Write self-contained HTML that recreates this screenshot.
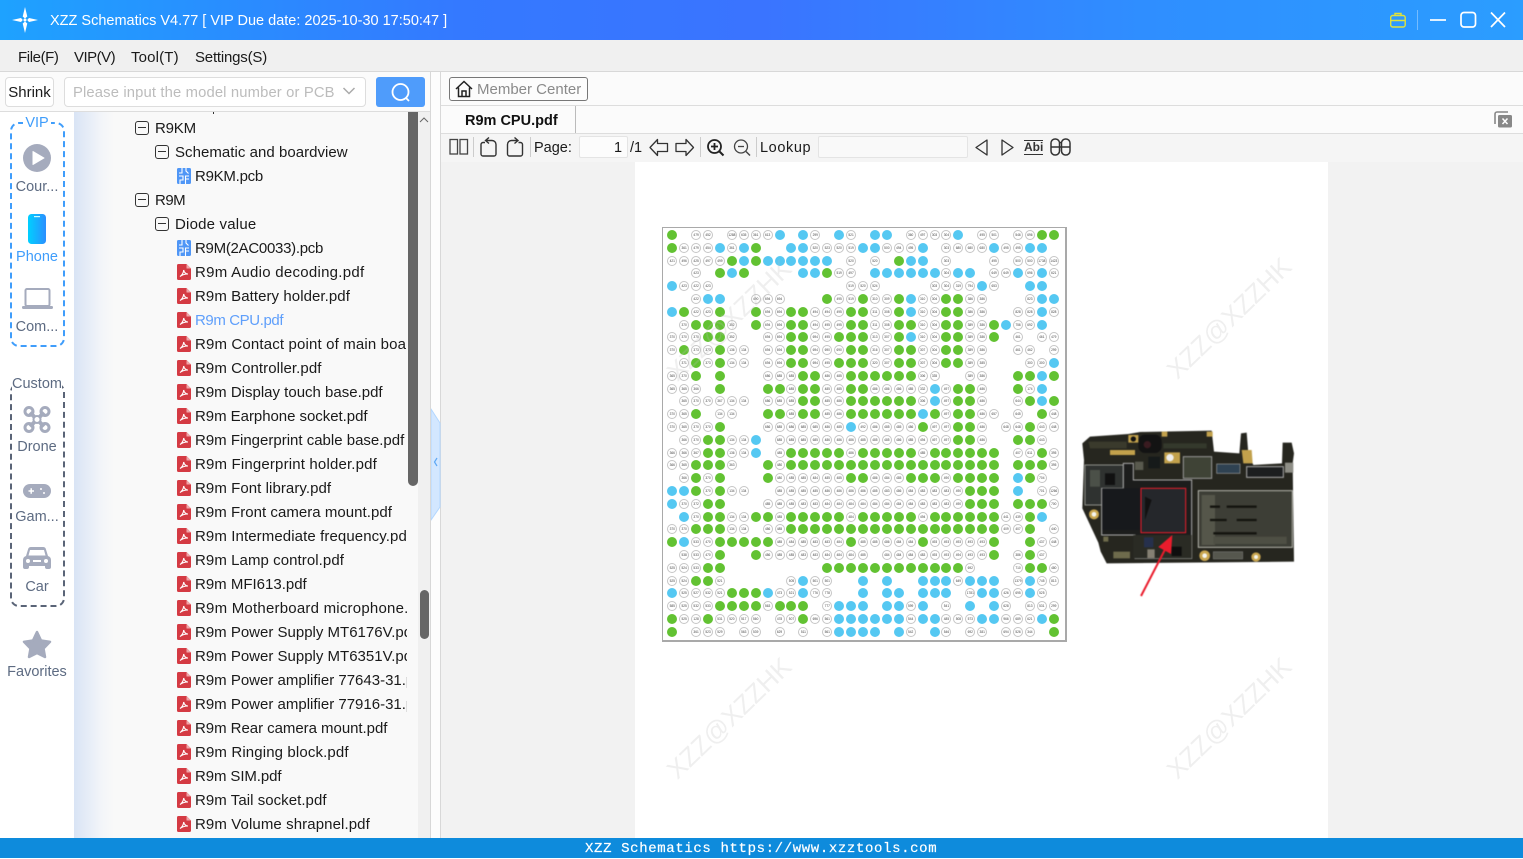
<!DOCTYPE html>
<html><head><meta charset="utf-8"><title>XZZ Schematics</title>
<style>
*{box-sizing:border-box}
html,body{margin:0;padding:0;width:1523px;height:858px;overflow:hidden;background:#fff;font-family:"Liberation Sans","Noto Sans CJK SC",sans-serif;font-size:15px;color:#1a1a1a}
.a{position:absolute}
.tx{position:absolute;white-space:nowrap;line-height:20px;height:20px}
#title{left:0;top:0;width:1523px;height:40px;background:linear-gradient(90deg,#1ea2ff 0,#3479ff 30%,#3a74ff 50%,#2f8eff 75%,#2b9dff 100%)}
#tree .r{height:24px;line-height:24px;white-space:nowrap;position:relative}
.mb{position:absolute;top:4px;width:14px;height:14px;border:1.4px solid #333;border-radius:3px}
.mb:after{content:"";position:absolute;left:2px;right:2px;top:4.8px;height:1.4px;background:#333}
.r svg{position:absolute;top:3px;left:103px}
.side{position:absolute;left:0;width:74px;text-align:center;color:#5d6b82;line-height:20px;font-size:14.5px;white-space:nowrap}
#grid{position:absolute;left:666.3px;top:228.6px;display:grid;grid-template-columns:repeat(33,11.93px);grid-auto-rows:12.8px;filter:blur(.3px)}
#grid>*{display:block;place-self:center;width:10px;height:10px;border-radius:50%;text-decoration:none;font-style:normal;font-weight:normal}
#grid b{background:#62c232}
#grid u{background:#55c8f2}
#grid i{background:none}
#grid s{border:1px solid #c6c6c6;background:#fff;font-size:3.2px;line-height:8px;text-align:center;color:#444;overflow:hidden;font-family:"Liberation Sans",sans-serif}
.wm{position:absolute;font-size:26px;color:rgba(190,190,190,.24);transform:rotate(-44deg);white-space:nowrap;line-height:34px;width:190px;text-align:center}
.sep{position:absolute;top:137px;width:1px;height:20px;background:#ccc}
</style></head><body>
<svg width="0" height="0" style="position:absolute"><defs>
<symbol id="pdf" viewBox="0 0 14 16"><path d="M1.5 0H9.5L14 4.5V14.5A1.5 1.5 0 0 1 12.5 16H1.5A1.5 1.5 0 0 1 0 14.5V1.5A1.5 1.5 0 0 1 1.5 0Z" fill="#d43a43"/><path d="M9.5 0L14 4.5H9.5Z" fill="#f0a4a8"/><path d="M3 12.5C5 11.5 6.5 8.5 6.7 6C7 8.5 9 10 11 10C8.5 10 5.5 10.5 3 12.5Z" fill="none" stroke="#fff" stroke-width="1.1"/></symbol>
<symbol id="pcb" viewBox="0 0 14 16"><rect width="14" height="16" rx="1.5" fill="#4f96f6"/><path d="M5 0V5H2M2 8H6V12H3V16M9 0V3L11.5 5.5M12 8H8.500V16M8.500 11H12" fill="none" stroke="#fff" stroke-width="1.100"/></symbol>
</defs></svg>

<div id="title" class="a">
<svg class="a" style="left:11px;top:6px" width="28" height="28" viewBox="0 0 28 28"><path d="M14 1L16.300 10.500 14 12.500 11.700 10.500ZM14 27L16.300 17.500 14 15.500 11.700 17.500ZM1 14L10 12 11.800 14 10 16ZM27 14L18 12 16.200 14 18 16Z" fill="#fff"/><circle cx="14" cy="14" r="1.500" fill="#fff"/></svg>
<div class="tx" style="left:50px;top:11px;color:#fff;font-size:14.5px">XZZ Schematics V4.77 [ VIP Due date: 2025-10-30 17:50:47 ]</div>
<svg class="a" style="left:1389px;top:11px" width="18" height="18" viewBox="0 0 18 18" fill="none" stroke="#dfe23c" stroke-width="1.400"><rect x="1.700" y="4.500" width="14.500" height="11.500" rx="2"/><path d="M6 4.500V2.500H12V4.500M1.700 9.500H6M12 9.500H16.200M6 9.500H12"/></svg>
<div class="a" style="left:1417px;top:10px;width:1px;height:20px;background:rgba(255,255,255,.35)"></div>
<svg class="a" style="left:1428px;top:9px" width="85" height="22" viewBox="0 0 85 22" fill="none" stroke="#fff" stroke-width="1.700"><path d="M2 11H18"/><rect x="33" y="3.500" width="14.500" height="14.500" rx="3"/><path d="M63 3.500L77 18M77 3.500L63 18"/></svg>
</div>

<div class="a" style="left:0;top:40px;width:1523px;height:32px;background:#f0f0f0;border-bottom:1px solid #d8d8d8"></div>
<div class="tx" style="left:18px;top:48px;letter-spacing:-.4px">File(F)</div>
<div class="tx" style="left:74px;top:48px;letter-spacing:-.5px">VIP(V)</div>
<div class="tx" style="left:131px;top:48px;letter-spacing:.15px">Tool(T)</div>
<div class="tx" style="left:195px;top:48px;letter-spacing:-.2px">Settings(S)</div>

<div class="a" style="left:0;top:72px;width:430px;height:40px;background:#fbfbfb;border-bottom:1px solid #ddd"></div>
<div class="a" style="left:5px;top:77px;width:49px;height:30px;background:#fff;border:1px solid #ddd;border-radius:4px;text-align:center;line-height:30px">Shrink</div>
<div class="a" style="left:64px;top:77px;width:302px;height:30px;background:#fff;border:1px solid #ddd;border-radius:4px"></div>
<div class="tx" style="left:73px;top:83px;color:#bcbcbc;font-size:14.8px;letter-spacing:.14px">Please input the model number or PCB</div>
<svg class="a" style="left:342px;top:86px" width="14" height="10" viewBox="0 0 14 10" fill="none" stroke="#aaa" stroke-width="1.500"><path d="M1.500 2L7 7.500 12.500 2"/></svg>
<div class="a" style="left:376px;top:77px;width:49px;height:30px;background:#4f9cfb;border-radius:3px"></div>
<svg class="a" style="left:390px;top:81px" width="22" height="22" viewBox="0 0 22 22" fill="none" stroke="#fff" stroke-width="1.800"><circle cx="10.500" cy="11" r="8"/><path d="M16 17L19 20"/></svg>

<!-- left rail -->
<div class="a" style="left:74px;top:112px;width:344px;height:726px;background:linear-gradient(90deg,#d9e4f5 0,#f3f5f9 28px,#f9f9f9 40px)"></div>
<div class="a" style="left:418px;top:112px;width:12px;height:726px;background:#f0f0f0"></div>
<div class="a" style="left:430px;top:72px;width:1px;height:766px;background:#d8d8d8"></div>
<div class="a" style="left:431px;top:72px;width:9px;height:766px;background:#fdfdfd"></div>
<div class="a" style="left:440px;top:72px;width:1px;height:766px;background:#d8d8d8"></div>
<svg class="a" style="left:431px;top:408px" width="10" height="113" viewBox="0 0 10 113"><path d="M0 1L9 15V99L0 112Z" fill="#d3e7ff" stroke="#b3d7ff"/><path d="M6 50L3.500 54 6 58" fill="none" stroke="#5ea8f5" stroke-width="1.200"/></svg>

<div class="a" style="left:10px;top:122px;width:55px;height:225px;border:2px dashed #3f9dfb;border-radius:9px"></div>
<div class="side" style="top:113px;color:#3f9dfb"><span style="background:#fff;padding:0 2px">VIP</span></div>
<svg class="a" style="left:23px;top:144px" width="28" height="28" viewBox="0 0 28 28"><circle cx="14" cy="14" r="14" fill="#a5abbd"/><path d="M10 7.500L21 14 10 20.500Z" fill="#fff" stroke="#fff" stroke-linejoin="round"/></svg>
<div class="side" style="top:177px">Cour...</div>
<svg class="a" style="left:28px;top:214px" width="18" height="30" viewBox="0 0 18 30"><defs><linearGradient id="ph" x1="0" x2="1" y1="0" y2="0"><stop offset="0" stop-color="#00d0ff"/><stop offset="1" stop-color="#2b8fff"/></linearGradient></defs><rect width="18" height="30" rx="3.500" fill="url(#ph)"/><rect x="6" y="2" width="6" height="1.200" fill="#cff"/></svg>
<div class="side" style="top:247px;color:#3f9dfb">Phone</div>
<svg class="a" style="left:22px;top:288px" width="31" height="22" viewBox="0 0 31 22"><rect x="3.500" y="1" width="24" height="17" rx="1.500" fill="none" stroke="#a5abbd" stroke-width="2"/><rect x="0" y="18" width="31" height="3" rx="1.200" fill="#a5abbd"/></svg>
<div class="side" style="top:317px">Com...</div>

<div class="a" style="left:10px;top:383px;width:55px;height:224px;border:2px dashed #5a6477;border-radius:9px"></div>
<div class="side" style="top:374px"><span style="background:#fff">Custom</span></div>
<svg class="a" style="left:23px;top:405px" width="28" height="29" viewBox="0 0 28 29" fill="none" stroke="#a5abbd"><path d="M7 7.500L21 21.500M21 7.500L7 21.500" stroke-width="4"/><circle cx="6" cy="6.500" r="4" stroke-width="3"/><circle cx="22" cy="6.500" r="4" stroke-width="3"/><circle cx="6" cy="22.500" r="4" stroke-width="3"/><circle cx="22" cy="22.500" r="4" stroke-width="3"/><circle cx="14" cy="14.500" r="3.500" fill="#fff" stroke-width="2"/></svg>
<div class="side" style="top:437px">Drone</div>
<svg class="a" style="left:23px;top:484px" width="28" height="14" viewBox="0 0 28 14"><rect width="28" height="14" rx="7" fill="#a5abbd"/><path d="M5.500 7H11M8.200 4.300V9.700" stroke="#fff" stroke-width="1.500"/><circle cx="18" cy="5" r="1" fill="#fff"/><circle cx="21" cy="9" r="1" fill="#fff"/></svg>
<div class="side" style="top:507px">Gam...</div>
<svg class="a" style="left:23px;top:547px" width="28" height="24" viewBox="0 0 28 24"><path d="M5 2.500Q5.500 0 8 0H20Q22.500 0 23 2.500L25 9Q28 10 28 13V20Q28 22 26 22H24Q22 22 22 20V19H6V20Q6 22 4 22H2Q0 22 0 20V13Q0 10 3 9Z" fill="#a5abbd"/><path d="M7 3H21L22.500 8.500H5.500Z" fill="#fff"/><circle cx="5" cy="14" r="2" fill="#fff"/><circle cx="23" cy="14" r="2" fill="#fff"/><rect x="10" y="13" width="8" height="2" fill="#fff"/></svg>
<div class="side" style="top:577px">Car</div>
<svg class="a" style="left:22px;top:630px" width="30" height="29" viewBox="0 0 30 29"><path d="M15 2L19 10.500 28 11.800 21.500 18.500 23 27 15 23 7 27 8.500 18.500 2 11.800 11 10.500Z" fill="#a5abbd" stroke="#a5abbd" stroke-width="2.500" stroke-linejoin="round"/></svg>
<div class="side" style="top:662px">Favorites</div>

<!-- tree -->
<div id="tree" class="a" style="left:74px;top:112px;width:333px;height:726px;overflow:hidden;padding-top:5px">
<div class="r" style="padding-left:81px;letter-spacing:-.2px"><span class="mb" style="left:61px"></span>R9KM</div>
<div class="r" style="padding-left:101px;letter-spacing:.04px"><span class="mb" style="left:81px"></span>Schematic and boardview</div>
<div class="r" style="padding-left:121px;letter-spacing:-.25px"><svg width="14" height="16"><use href="#pcb"/></svg>R9KM.pcb</div>
<div class="r" style="padding-left:81px;letter-spacing:-.5px"><span class="mb" style="left:61px"></span>R9M</div>
<div class="r" style="padding-left:101px;letter-spacing:.2px"><span class="mb" style="left:81px"></span>Diode value</div>
<div class="r" style="padding-left:121px;letter-spacing:-.28px"><svg width="14" height="16"><use href="#pcb"/></svg>R9M(2AC0033).pcb</div>
<div class="r" style="padding-left:121px;letter-spacing:.27px"><svg width="14" height="16"><use href="#pdf"/></svg>R9m Audio decoding.pdf</div>
<div class="r" style="padding-left:121px;letter-spacing:.07px"><svg width="14" height="16"><use href="#pdf"/></svg>R9m Battery holder.pdf</div>
<div class="r" style="padding-left:121px;color:#5f9ffb;letter-spacing:-.4px"><svg width="14" height="16"><use href="#pdf"/></svg>R9m CPU.pdf</div>
<div class="r" style="padding-left:121px;letter-spacing:.15px"><svg width="14" height="16"><use href="#pdf"/></svg>R9m Contact point of main board.pdf</div>
<div class="r" style="padding-left:121px;letter-spacing:.08px"><svg width="14" height="16"><use href="#pdf"/></svg>R9m Controller.pdf</div>
<div class="r" style="padding-left:121px"><svg width="14" height="16"><use href="#pdf"/></svg>R9m Display touch base.pdf</div>
<div class="r" style="padding-left:121px;letter-spacing:-.04px"><svg width="14" height="16"><use href="#pdf"/></svg>R9m Earphone socket.pdf</div>
<div class="r" style="padding-left:121px"><svg width="14" height="16"><use href="#pdf"/></svg>R9m Fingerprint cable base.pdf</div>
<div class="r" style="padding-left:121px;letter-spacing:.17px"><svg width="14" height="16"><use href="#pdf"/></svg>R9m Fingerprint holder.pdf</div>
<div class="r" style="padding-left:121px;letter-spacing:.07px"><svg width="14" height="16"><use href="#pdf"/></svg>R9m Font library.pdf</div>
<div class="r" style="padding-left:121px;letter-spacing:.04px"><svg width="14" height="16"><use href="#pdf"/></svg>R9m Front camera mount.pdf</div>
<div class="r" style="padding-left:121px;letter-spacing:.1px"><svg width="14" height="16"><use href="#pdf"/></svg>R9m Intermediate frequency.pdf</div>
<div class="r" style="padding-left:121px;letter-spacing:.07px"><svg width="14" height="16"><use href="#pdf"/></svg>R9m Lamp control.pdf</div>
<div class="r" style="padding-left:121px"><svg width="14" height="16"><use href="#pdf"/></svg>R9m MFI613.pdf</div>
<div class="r" style="padding-left:121px;letter-spacing:.22px"><svg width="14" height="16"><use href="#pdf"/></svg>R9m Motherboard microphone.pdf</div>
<div class="r" style="padding-left:121px"><svg width="14" height="16"><use href="#pdf"/></svg>R9m Power Supply MT6176V.pdf</div>
<div class="r" style="padding-left:121px"><svg width="14" height="16"><use href="#pdf"/></svg>R9m Power Supply MT6351V.pdf</div>
<div class="r" style="padding-left:121px"><svg width="14" height="16"><use href="#pdf"/></svg>R9m Power amplifier 77643-31.pdf</div>
<div class="r" style="padding-left:121px"><svg width="14" height="16"><use href="#pdf"/></svg>R9m Power amplifier 77916-31.pdf</div>
<div class="r" style="padding-left:121px;letter-spacing:-.04px"><svg width="14" height="16"><use href="#pdf"/></svg>R9m Rear camera mount.pdf</div>
<div class="r" style="padding-left:121px;letter-spacing:.13px"><svg width="14" height="16"><use href="#pdf"/></svg>R9m Ringing block.pdf</div>
<div class="r" style="padding-left:121px;letter-spacing:-.1px"><svg width="14" height="16"><use href="#pdf"/></svg>R9m SIM.pdf</div>
<div class="r" style="padding-left:121px;letter-spacing:.05px"><svg width="14" height="16"><use href="#pdf"/></svg>R9m Tail socket.pdf</div>
<div class="r" style="padding-left:121px;letter-spacing:.1px"><svg width="14" height="16"><use href="#pdf"/></svg>R9m Volume shrapnel.pdf</div>
</div>
<div class="a" style="left:213px;top:112px;width:1px;height:2px;background:#333"></div>
<div class="a" style="left:408px;top:112px;width:10px;height:374px;background:#666;border-radius:0 0 5px 5px"></div>
<svg class="a" style="left:419px;top:116px" width="10" height="8" viewBox="0 0 10 8" fill="none" stroke="#666"><path d="M1 6L5 2 9 6"/></svg>
<div class="a" style="left:420px;top:590px;width:9px;height:49px;background:#666;border-radius:5px"></div>

<!-- right -->
<div class="a" style="left:441px;top:72px;width:1082px;height:34px;background:#fbfbfb;border-bottom:1px solid #ddd"></div>
<div class="a" style="left:449px;top:77px;width:139px;height:24px;border:1px solid #777;border-radius:3px;background:#fcfcfc"></div>
<svg class="a" style="left:455px;top:80px" width="18" height="18" viewBox="0 0 18 18" fill="none" stroke="#222" stroke-width="1.500"><path d="M1 9L9 1.500 17 9M3.500 7.500V16.500H14.500V7.500M7 16.500V11H11V16.500"/></svg>
<div class="tx" style="left:477px;top:80px;color:#8a8a8a;font-size:15px">Member Center</div>
<div class="a" style="left:441px;top:106px;width:1082px;height:28px;background:#fbfbfb;border-bottom:1px solid #ddd"></div>
<div class="tx" style="left:465px;top:110px;font-weight:bold;color:#111;font-size:14.500px;line-height:20px;margin-top:1px">R9m CPU.pdf</div>
<div class="a" style="left:575px;top:106px;width:1px;height:27px;background:#bbb"></div>
<svg class="a" style="left:1494px;top:110px" width="19" height="18" viewBox="0 0 19 18"><path d="M14 2H3A2 2 0 0 0 1 4V14" fill="none" stroke="#888" stroke-width="1.600"/><rect x="4" y="5" width="14" height="12.500" rx="1.500" fill="#888"/><path d="M8.500 8.500L13.500 14M13.500 8.500L8.500 14" stroke="#fff" stroke-width="1.500"/></svg>

<div class="a" style="left:441px;top:134px;width:1082px;height:28px;background:#f5f5f5"></div>
<div class="a" style="left:441px;top:162px;width:194px;height:676px;background:#f2f2f2"></div>
<div class="a" style="left:1328px;top:162px;width:195px;height:676px;background:#f2f2f2"></div>
<div class="a" style="left:635px;top:162px;width:693px;height:676px;background:#fff"></div>

<svg class="a" style="left:449px;top:138px" width="20" height="18" viewBox="0 0 20 18" fill="none" stroke="#444" stroke-width="1.300"><rect x="1" y="1.500" width="7.500" height="14.500"/><rect x="11" y="1.500" width="7.500" height="14.500"/></svg>
<div class="sep" style="left:473px"></div>
<svg class="a" style="left:479px;top:137px" width="46" height="20" viewBox="0 0 46 20" fill="none" stroke="#333" stroke-width="1.400"><path d="M6 5.500H4A2 2 0 0 0 2 7.500V17A2 2 0 0 0 4 19H15A2 2 0 0 0 17 17V7.500A4 4 0 0 0 13 3.500H7M10 .5L6.500 3.500 10 6.500"/><path d="M39.500 5.500H41.500A2 2 0 0 1 43.500 7.500V17A2 2 0 0 1 41.500 19H30.500A2 2 0 0 1 28.500 17V7.500A4 4 0 0 1 32.500 3.500H38.500M35.500 .5L39 3.500 35.500 6.500"/></svg>
<div class="sep" style="left:530px"></div>
<div class="tx" style="left:534px;top:138px;font-size:14.500px">Page:</div>
<div class="a" style="left:579px;top:136px;width:49px;height:22px;background:#fcfcfc;border:1px solid #e4e4e4;border-radius:2px"></div>
<div class="tx" style="left:614px;top:138px;font-size:14.500px">1</div>
<div class="tx" style="left:630px;top:138px;font-size:14.500px">/1</div>
<svg class="a" style="left:649px;top:138px" width="46" height="19" viewBox="0 0 46 19" fill="none" stroke="#333" stroke-width="1.300" stroke-linejoin="round"><path d="M1 9.500L8.500 1.500V5.500H18.500V13.500H8.500V17.500Z"/><path d="M44.500 9.500L37 1.500V5.500H27V13.500H37V17.500Z"/></svg>
<div class="sep" style="left:700px"></div>
<svg class="a" style="left:706px;top:138px" width="46" height="19" viewBox="0 0 46 19" fill="none" stroke="#222"><circle cx="8.500" cy="8.500" r="6.500" stroke-width="1.800"/><path d="M13.500 13.500L17.500 17.500" stroke-width="2"/><path d="M5 8.500H12M8.500 5V12" stroke-width="1.800"/><circle cx="35" cy="8.500" r="6.500" stroke="#444" stroke-width="1.300"/><path d="M40 13.500L44 17.500" stroke="#444" stroke-width="1.500"/><path d="M32 8.500H38" stroke="#444" stroke-width="1.300"/></svg>
<div class="sep" style="left:756px"></div>
<div class="tx" style="left:760px;top:138px;font-size:14.500px;letter-spacing:.6px">Lookup</div>
<div class="a" style="left:818px;top:136px;width:150px;height:22px;background:#f9f9f9;border:1px solid #e4e4e4;border-radius:2px"></div>
<svg class="a" style="left:974px;top:138px" width="42" height="19" viewBox="0 0 42 19" fill="none" stroke="#333" stroke-width="1.300" stroke-linejoin="round"><path d="M13 2L2 9.500 13 17Z"/><path d="M28 2L39 9.500 28 17Z"/></svg>
<div class="tx" style="left:1024px;top:138px;font-size:12px;font-weight:bold;color:#333;border-top:1px solid #333;border-bottom:1px solid #333;height:15px;line-height:13px;margin-top:2px">Abi</div>
<svg class="a" style="left:1050px;top:138px" width="21" height="18" viewBox="0 0 21 18" fill="none" stroke="#333" stroke-width="1.500"><rect x="1" y="1" width="8.500" height="16" rx="4"/><rect x="11.500" y="1" width="8.500" height="16" rx="4"/><path d="M1 9H20M9.500 4.500H11.500"/></svg>

<!-- grid -->
<div class="a" style="left:662px;top:227px;width:404.5px;height:414.5px;background:#fff;border:2px solid #a9a9a9;border-width:1.500px 2px 2px 1.500px"></div>
<div id="grid">
<b></b><i></i><s>479</s><s>452</s><i></i><s>1288</s><s>635</s><s>361</s><s>613</s><u></u><i></i><u></u><s>299</s><i></i><u></u><s>521</s><i></i><u></u><u></u><i></i><s>360</s><s>497</s><s>303</s><s>304</s><u></u><i></i><s>495</s><s>501</s><i></i><s>546</s><s>696</s><b></b><b></b>
<b></b><s>361</s><s>479</s><s>454</s><u></u><s>361</s><u></u><b></b><i></i><i></i><u></u><u></u><s>520</s><s>523</s><s>520</s><s>519</s><u></u><u></u><s>500</s><s>494</s><s>495</s><u></u><i></i><s>303</s><s>680</s><s>680</s><s>680</s><u></u><s>495</s><s>495</s><u></u><u></u><i></i>
<s>421</s><s>496</s><s>425</s><s>497</s><s>499</s><b></b><u></u><b></b><u></u><u></u><u></u><u></u><u></u><u></u><i></i><s>520</s><i></i><s>520</s><i></i><b></b><u></u><u></u><i></i><s>303</s><i></i><i></i><i></i><s>495</s><i></i><s>500</s><s>500</s><s>1738</s><s>1423</s>
<i></i><i></i><s>423</s><i></i><b></b><u></u><b></b><i></i><i></i><i></i><i></i><u></u><u></u><b></b><s>519</s><s>497</s><i></i><u></u><u></u><u></u><u></u><u></u><u></u><s>304</s><u></u><u></u><i></i><s>649</s><s>649</s><u></u><s>696</s><u></u><s>621</s>
<u></u><s>423</s><s>422</s><s>423</s><i></i><i></i><i></i><i></i><i></i><i></i><i></i><i></i><i></i><i></i><i></i><s>519</s><s>520</s><s>524</s><i></i><i></i><i></i><i></i><s>303</s><s>304</s><s>319</s><s>794</s><u></u><s>653</s><i></i><i></i><u></u><u></u><i></i>
<i></i><i></i><s>422</s><u></u><u></u><i></i><i></i><s>490</s><s>694</s><s>694</s><i></i><i></i><i></i><b></b><s>495</s><s>519</s><b></b><s>310</s><s>309</s><b></b><u></u><s>310</s><s>304</s><b></b><b></b><s>386</s><s>386</s><i></i><i></i><i></i><s>823</s><u></u><u></u>
<u></u><b></b><s>422</s><s>423</s><b></b><i></i><i></i><b></b><s>694</s><s>694</s><b></b><b></b><s>494</s><s>494</s><s>495</s><b></b><b></b><s>311</s><s>308</s><b></b><u></u><s>310</s><s>304</s><b></b><b></b><s>386</s><s>386</s><i></i><i></i><s>828</s><s>828</s><u></u><s>828</s>
<i></i><s>370</s><b></b><b></b><b></b><s>352</s><i></i><b></b><s>694</s><s>694</s><b></b><b></b><s>494</s><s>495</s><s>495</s><b></b><b></b><s>311</s><s>308</s><b></b><b></b><s>310</s><s>304</s><b></b><b></b><s>389</s><s>386</s><b></b><u></u><s>756</s><s>692</s><u></u><i></i>
<s>370</s><s>370</s><s>370</s><b></b><b></b><s>352</s><i></i><i></i><s>694</s><s>694</s><b></b><b></b><s>694</s><s>495</s><b></b><b></b><b></b><s>313</s><s>307</s><b></b><u></u><s>310</s><s>304</s><b></b><b></b><s>389</s><s>386</s><b></b><i></i><s>461</s><i></i><s>461</s><s>479</s>
<s>370</s><b></b><s>373</s><s>373</s><b></b><s>136</s><s>134</s><i></i><s>694</s><s>694</s><b></b><b></b><s>694</s><s>690</s><s>690</s><b></b><b></b><s>316</s><s>307</s><b></b><b></b><s>307</s><s>304</s><b></b><b></b><s>389</s><s>386</s><i></i><i></i><s>461</s><s>462</s><i></i><s>299</s>
<i></i><s>371</s><b></b><s>373</s><b></b><s>134</s><s>134</s><i></i><s>694</s><s>694</s><b></b><b></b><s>694</s><s>495</s><b></b><b></b><b></b><s>320</s><s>307</s><b></b><b></b><s>307</s><s>304</s><b></b><b></b><s>389</s><s>385</s><i></i><i></i><i></i><s>300</s><s>300</s><u></u>
<s>365</s><s>370</s><b></b><i></i><b></b><i></i><i></i><i></i><s>686</s><s>685</s><s>685</s><b></b><b></b><s>486</s><s>485</s><b></b><b></b><b></b><b></b><b></b><b></b><s>306</s><s>335</s><i></i><i></i><s>389</s><s>386</s><i></i><i></i><b></b><b></b><u></u><b></b>
<s>365</s><s>365</s><s>366</s><i></i><b></b><i></i><i></i><i></i><b></b><b></b><s>685</s><b></b><b></b><s>485</s><s>485</s><b></b><b></b><s>486</s><s>486</s><s>486</s><s>485</s><s>332</s><u></u><s>497</s><b></b><b></b><s>486</s><i></i><i></i><b></b><s>174</s><u></u><i></i>
<i></i><s>365</s><s>370</s><s>370</s><s>367</s><s>134</s><s>134</s><i></i><s>686</s><s>685</s><s>685</s><b></b><b></b><s>485</s><s>486</s><b></b><b></b><b></b><b></b><b></b><b></b><s>306</s><u></u><s>497</s><b></b><b></b><s>486</s><i></i><i></i><s>644</s><b></b><u></u><b></b>
<s>370</s><s>365</s><b></b><i></i><s>134</s><s>134</s><i></i><i></i><b></b><b></b><s>685</s><b></b><b></b><s>485</s><s>486</s><b></b><b></b><b></b><b></b><b></b><b></b><u></u><b></b><s>497</s><b></b><b></b><s>486</s><s>657</s><i></i><s>645</s><i></i><b></b><s>448</s>
<s>370</s><s>365</s><s>370</s><s>370</s><b></b><i></i><i></i><i></i><s>686</s><s>685</s><s>686</s><s>685</s><s>685</s><s>486</s><s>485</s><u></u><s>492</s><s>486</s><s>485</s><s>485</s><s>486</s><b></b><s>497</s><s>497</s><b></b><b></b><s>486</s><i></i><s>648</s><s>648</s><b></b><s>443</s><s>448</s>
<i></i><s>366</s><s>370</s><b></b><b></b><s>134</s><s>134</s><u></u><i></i><s>685</s><s>685</s><s>685</s><s>685</s><s>486</s><s>486</s><s>486</s><s>485</s><s>485</s><s>485</s><s>486</s><s>485</s><s>494</s><s>497</s><s>497</s><b></b><b></b><s>486</s><i></i><i></i><b></b><b></b><s>443</s><i></i>
<s>366</s><s>366</s><s>367</s><b></b><b></b><s>136</s><s>134</s><u></u><i></i><s>485</s><b></b><b></b><b></b><b></b><b></b><s>486</s><b></b><b></b><b></b><b></b><b></b><s>485</s><b></b><b></b><b></b><b></b><b></b><b></b><i></i><s>407</s><s>611</s><b></b><s>395</s>
<s>366</s><s>365</s><b></b><b></b><b></b><s>363</s><i></i><i></i><b></b><s>480</s><b></b><b></b><b></b><b></b><b></b><b></b><b></b><b></b><b></b><b></b><b></b><b></b><b></b><b></b><b></b><b></b><b></b><b></b><i></i><b></b><b></b><b></b><s>395</s>
<i></i><s>366</s><b></b><s>370</s><b></b><i></i><i></i><i></i><b></b><s>480</s><s>485</s><s>485</s><s>484</s><s>485</s><s>485</s><b></b><b></b><s>486</s><s>484</s><s>485</s><b></b><b></b><b></b><s>490</s><b></b><b></b><b></b><b></b><i></i><u></u><b></b><s>704</s><i></i>
<u></u><u></u><b></b><s>370</s><b></b><s>134</s><s>134</s><i></i><i></i><s>485</s><s>485</s><s>485</s><s>485</s><s>486</s><s>486</s><s>486</s><s>486</s><s>485</s><s>483</s><s>486</s><s>484</s><s>483</s><s>483</s><s>483</s><s>490</s><b></b><b></b><b></b><i></i><u></u><i></i><s>701</s><s>1266</s>
<u></u><s>370</s><s>372</s><b></b><b></b><i></i><i></i><i></i><s>485</s><s>485</s><s>485</s><s>483</s><s>483</s><s>484</s><s>484</s><s>484</s><s>484</s><s>484</s><s>484</s><s>484</s><s>484</s><s>483</s><s>483</s><s>483</s><s>490</s><b></b><b></b><b></b><i></i><b></b><b></b><b></b><s>700</s>
<i></i><u></u><s>370</s><b></b><b></b><s>134</s><s>134</s><b></b><b></b><s>485</s><b></b><b></b><b></b><b></b><b></b><s>484</s><b></b><b></b><b></b><b></b><b></b><s>494</s><b></b><b></b><b></b><b></b><b></b><b></b><s>441</s><s>439</s><b></b><u></u><i></i>
<s>370</s><s>370</s><b></b><b></b><b></b><s>134</s><s>134</s><i></i><s>486</s><s>485</s><b></b><b></b><b></b><b></b><b></b><b></b><b></b><b></b><b></b><b></b><b></b><b></b><b></b><b></b><b></b><b></b><b></b><b></b><s>409</s><s>407</s><b></b><i></i><s>440</s>
<b></b><u></u><s>533</s><s>470</s><b></b><b></b><b></b><b></b><b></b><s>485</s><s>484</s><s>485</s><s>483</s><s>483</s><s>484</s><b></b><s>485</s><s>485</s><s>486</s><s>484</s><s>484</s><b></b><s>493</s><s>493</s><s>493</s><s>493</s><s>493</s><b></b><i></i><i></i><b></b><s>437</s><s>448</s>
<i></i><s>538</s><s>533</s><s>470</s><b></b><i></i><i></i><b></b><s>486</s><s>485</s><s>485</s><s>483</s><s>483</s><s>484</s><s>484</s><s>484</s><s>485</s><i></i><s>484</s><s>484</s><s>484</s><s>483</s><s>493</s><s>493</s><s>494</s><s>493</s><s>493</s><b></b><i></i><s>386</s><b></b><s>437</s><i></i>
<s>525</s><s>524</s><s>533</s><b></b><b></b><i></i><i></i><i></i><i></i><i></i><i></i><i></i><i></i><b></b><b></b><b></b><b></b><b></b><b></b><b></b><b></b><b></b><b></b><b></b><b></b><s>692</s><i></i><i></i><i></i><s>710</s><b></b><b></b><s>480</s>
<s>525</s><s>524</s><b></b><b></b><s>521</s><i></i><i></i><i></i><i></i><i></i><s>505</s><u></u><s>501</s><s>501</s><i></i><i></i><u></u><i></i><u></u><i></i><i></i><u></u><u></u><u></u><s>649</s><u></u><u></u><u></u><i></i><s>1379</s><u></u><s>745</s><s>813</s>
<u></u><s>525</s><s>527</s><s>532</s><s>521</s><b></b><b></b><b></b><u></u><s>473</s><s>521</s><u></u><s>776</s><s>778</s><i></i><i></i><u></u><i></i><u></u><u></u><i></i><u></u><u></u><u></u><i></i><s>1781</s><u></u><u></u><s>426</s><s>695</s><u></u><s>525</s><i></i>
<s>585</s><s>525</s><s>532</s><s>533</s><b></b><b></b><b></b><b></b><s>563</s><b></b><b></b><b></b><i></i><s>777</s><u></u><u></u><u></u><i></i><u></u><u></u><s>599</s><u></u><i></i><s>541</s><i></i><u></u><i></i><u></u><s>628</s><i></i><s>813</s><s>531</s><s>299</s>
<b></b><s>525</s><s>128</s><b></b><s>531</s><s>520</s><s>517</s><s>560</s><i></i><s>478</s><s>507</s><b></b><s>696</s><s>561</s><u></u><u></u><u></u><u></u><u></u><u></u><s>544</s><u></u><u></u><s>485</s><s>508</s><s>573</s><u></u><u></u><s>966</s><s>689</s><s>621</s><u></u><b></b>
<b></b><i></i><s>361</s><s>523</s><s>529</s><i></i><s>563</s><s>539</s><i></i><s>629</s><i></i><s>511</s><i></i><s>561</s><u></u><u></u><u></u><u></u><i></i><u></u><s>542</s><i></i><u></u><s>546</s><i></i><s>692</s><s>381</s><i></i><s>694</s><s>526</s><s>344</s><i></i><b></b>
</div>

<!-- PCB -->
<svg class="a" style="left:1070px;top:420px;filter:blur(.45px)" width="235" height="185" viewBox="0 0 705 555">
<path d="M37 70L60 50 175 42 210 36 425 32 432 95 508 100 513 40 530 38 535 100 550 135 636 130 638 68 665 68 672 100 668 130 672 425 110 430 92 395 85 368 37 265 42 120Z" fill="#26261f"/>
<path d="M55 65H170V85H60Z" fill="#3a3a2c"/>
<path d="M280 70H410V85H280Z" fill="#34392c"/>
<rect x="45" y="135" width="115" height="120" fill="#2f3230" stroke="#8e908a" stroke-width="3"/>
<rect x="60" y="150" width="30" height="50" fill="#4b5048"/><rect x="105" y="160" width="30" height="35" fill="#111"/>
<path d="M160 130H190V180H365V415H195V345H95V205H160Z" fill="#1c1d1c" stroke="#aaa" stroke-width="3"/>
<rect x="97" y="205" width="118" height="125" fill="#17191c"/>
<rect x="213" y="205" width="134" height="133" fill="#25272b" stroke="#ea1c2c" stroke-width="3"/>
<path d="M225 300L245 240 225 230Z" fill="#111"/>
<rect x="385" y="212" width="282" height="170" fill="#3d3e36" stroke="#b8b8ae" stroke-width="3"/>
<rect x="395" y="225" width="40" height="150" fill="#55564a"/>
<rect x="430" y="350" width="220" height="22" fill="#4e4f44"/>
<path d="M420 260H450M470 260H560M420 300H470M500 300H560M430 340H560" stroke="#14140f" stroke-width="7"/>
<rect x="190" y="345" width="175" height="70" fill="#2a2b24"/>
<rect x="222" y="352" width="28" height="30" fill="#26304c"/>
<rect x="232" y="388" width="22" height="26" fill="#858073"/>
<rect x="305" y="380" width="30" height="28" fill="#0e0e0e"/>
<rect x="205" y="44" width="70" height="55" rx="20" fill="#131313"/><circle cx="232" cy="74" r="11" fill="#3a1b20"/>
<rect x="340" y="110" width="85" height="65" fill="#3f4336" stroke="#999" stroke-width="3"/>
<rect x="195" y="125" width="25" height="25" fill="#595a4e"/>
<rect x="235" y="110" width="35" height="35" fill="#161a1a"/>
<rect x="440" y="132" width="70" height="28" fill="#2f4252" stroke="#999" stroke-width="2"/>
<rect x="530" y="140" width="110" height="32" fill="#1c1e1f" stroke="#aaa" stroke-width="3"/>
<rect x="645" y="128" width="25" height="30" fill="#8e8e86"/>
<rect x="430" y="395" width="88" height="22" fill="#56574e" stroke="#999"/>
<path d="M283 97H330V130H283ZM120 90H195V105H120ZM175 45H205V68H175ZM275 35H292V50H275ZM410 35H428V50H410ZM515 90L545 90 548 130 520 130Z" fill="#c2a14c"/>
<circle cx="300" cy="113" r="11" fill="#eee"/><circle cx="190" cy="57" r="8" fill="#111"/>
<circle cx="72" cy="283" r="15" fill="#c9a64f"/><circle cx="72" cy="283" r="7" fill="#f5f5f0"/>
<circle cx="404" cy="407" r="16" fill="#c9a64f"/><circle cx="404" cy="407" r="7" fill="#f5f5f0"/>
<circle cx="558" cy="411" r="14" fill="#c9a64f"/><circle cx="558" cy="411" r="6" fill="#f5f5f0"/>
<path d="M130 395H180V415H130ZM100 350H115V365H100Z" fill="#6e6b4c"/>
<path d="M213 528L292 375" stroke="#ea1c2c" stroke-width="6"/><path d="M307 345L303 402 265 381Z" fill="#ea1c2c"/>
</svg>

<div class="wm" style="left:634px;top:303px">XZZ@XZZHK</div>
<div class="wm" style="left:1134px;top:301px">XZZ@XZZHK</div>
<div class="wm" style="left:634px;top:701px">XZZ@XZZHK</div>
<div class="wm" style="left:1134px;top:701px">XZZ@XZZHK</div>

<div class="a" style="left:0;top:838px;width:1523px;height:20px;background:#0e8bdc"></div>
<div class="tx" style="left:585px;top:839px;color:#fff;font-family:'Liberation Mono',monospace;font-size:14px;letter-spacing:.63px;-webkit-text-stroke:.2px #fff">XZZ Schematics https://www.xzztools.com</div>
</body></html>
